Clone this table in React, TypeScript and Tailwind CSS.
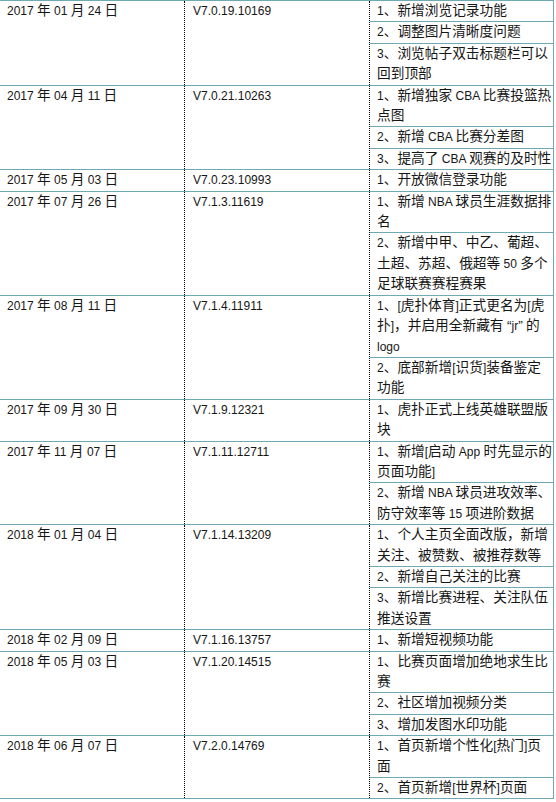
const rows: { date: string; version: string; items: string[][] }[] = [
  {
    date: "2017 年 01 月 24 日",
    version: "V7.0.19.10169",
    items: [["1、新增浏览记录功能"], ["2、调整图片清晰度问题"], ["3、浏览帖子双击标题栏可以", "回到顶部"]],
  },
  {
    date: "2017 年 04 月 11 日",
    version: "V7.0.21.10263",
    items: [["1、新增独家 CBA 比赛投篮热", "点图"], ["2、新增 CBA 比赛分差图"], ["3、提高了 CBA 观赛的及时性"]],
  },
  {
    date: "2017 年 05 月 03 日",
    version: "V7.0.23.10993",
    items: [["1、开放微信登录功能"]],
  },
  {
    date: "2017 年 07 月 26 日",
    version: "V7.1.3.11619",
    items: [["1、新增 NBA 球员生涯数据排", "名"], ["2、新增中甲、中乙、葡超、", "土超、苏超、俄超等 50 多个", "足球联赛赛程赛果"]],
  },
  {
    date: "2017 年 08 月 11 日",
    version: "V7.1.4.11911",
    items: [["1、[虎扑体育]正式更名为[虎", "扑]，并启用全新藏有 “jr” 的", "logo"], ["2、底部新增[识货]装备鉴定", "功能"]],
  },
  {
    date: "2017 年 09 月 30 日",
    version: "V7.1.9.12321",
    items: [["1、虎扑正式上线英雄联盟版", "块"]],
  },
  {
    date: "2017 年 11 月 07 日",
    version: "V7.1.11.12711",
    items: [["1、新增[启动 App 时先显示的", "页面功能]"], ["2、新增 NBA 球员进攻效率、", "防守效率等 15 项进阶数据"]],
  },
  {
    date: "2018 年 01 月 04 日",
    version: "V7.1.14.13209",
    items: [["1、个人主页全面改版，新增", "关注、被赞数、被推荐数等"], ["2、新增自己关注的比赛"], ["3、新增比赛进程、关注队伍", "推送设置"]],
  },
  {
    date: "2018 年 02 月 09 日",
    version: "V7.1.16.13757",
    items: [["1、新增短视频功能"]],
  },
  {
    date: "2018 年 05 月 03 日",
    version: "V7.1.20.14515",
    items: [["1、比赛页面增加绝地求生比", "赛"], ["2、社区增加视频分类"], ["3、增加发图水印功能"]],
  },
  {
    date: "2018 年 06 月 07 日",
    version: "V7.2.0.14769",
    items: [["1、首页新增个性化[热门]页", "面"], ["2、首页新增[世界杯]页面"]],
  },
];

// latin runs are set smaller than the CJK text, like the original page
function Mixed({ text }: { text: string }) {
  const parts = text.split(/([\x00-\x7F]+)/).filter(Boolean);
  return (
    <>
      {parts.map((p, i) =>
        /^[\x00-\x7F]+$/.test(p) ? (
          <span key={i} className="text-[12px] leading-none">
            {p}
          </span>
        ) : (
          <span key={i}>{p}</span>
        )
      )}
    </>
  );
}

export default function App() {
  return (
    <div className="min-h-screen bg-white">
      <div
        className="w-[554px] border-t border-[#6fa9b6] text-[13.7px] leading-[20.4px] text-[#161616]"
        style={{ fontFamily: '"Liberation Sans", "Noto Sans CJK SC", sans-serif' }}
      >
        {rows.map((row) => (
          <div key={row.date} className="grid grid-cols-[185px_185px_184px] border-b border-[#6fa9b6]">
            {/* date */}
            <div className="border-r border-dotted border-black pl-[7px] whitespace-nowrap">
              <Mixed text={row.date} />
            </div>

            {/* version */}
            <div className="border-r border-dotted border-black pl-2 whitespace-nowrap">
              <Mixed text={row.version} />
            </div>

            {/* changes */}
            <div className="flex flex-col border-r border-[#6fa9b6]">
              {row.items.map((lines, i) => (
                <div
                  key={i}
                  className={`pl-[7px] whitespace-nowrap ${i < row.items.length - 1 ? "border-b border-[#6fa9b6]" : ""}`}
                >
                  {lines.map((line) => (
                    <div key={line}>
                      <Mixed text={line} />
                    </div>
                  ))}
                </div>
              ))}
            </div>
          </div>
        ))}
      </div>
    </div>
  );
}
